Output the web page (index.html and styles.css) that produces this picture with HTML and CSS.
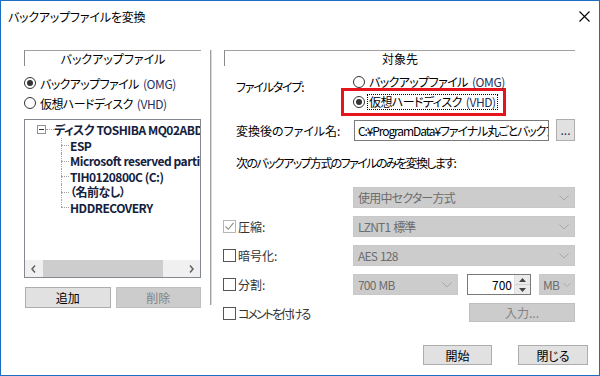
FILE: index.html
```html
<!DOCTYPE html>
<html lang="ja">
<head>
    <meta charset="UTF-8">
    <title>バックアップファイルを変換</title>
    <link rel="stylesheet" href="styles.css">
</head>
<body>
    <div class="window">
        <div class="titlebar">
            <span class="title">バックアップファイルを変換</span>
            <svg class="close" width="11" height="11" viewBox="0 0 11 11">
                <path d="M0.5 0.5 L10.5 10.5 M10.5 0.5 L0.5 10.5" stroke="#000" stroke-width="1.1" fill="none"/>
            </svg>
        </div>

        <div class="main">
            <div class="source">
                <div class="group-head">バックアップファイル</div>
                <div class="radios">
                    <div class="radio"><span class="dot on"></span><span>バックアップファイル <span class="lat">(OMG)</span></span></div>
                    <div class="radio"><span class="dot"></span><span>仮想ハードディスク <span class="lat">(VHD)</span></span></div>
                </div>
                <div class="tree">
                    <div class="tree-body">
                        <div class="root"><span class="toggle"></span><span class="dash"></span><span>ディスク TOSHIBA MQ02ABD: 931.5 GB</span></div>
                        <ul class="children">
                            <li>ESP</li>
                            <li>Microsoft reserved partition</li>
                            <li>TIH0120800C (C:)</li>
                            <li>（名前なし）</li>
                            <li>HDDRECOVERY</li>
                        </ul>
                    </div>
                    <div class="hscroll">
                        <span class="arrow">
                            <svg width="5" height="8" viewBox="0 0 5 8"><path d="M4 0.5 L1 4 L4 7.5" stroke="#606060" stroke-width="1.5" fill="none"/></svg>
                        </span>
                        <span class="thumb"></span>
                        <span class="track"></span>
                        <span class="arrow">
                            <svg width="5" height="8" viewBox="0 0 5 8"><path d="M1 0.5 L4 4 L1 7.5" stroke="#606060" stroke-width="1.5" fill="none"/></svg>
                        </span>
                    </div>
                </div>
                <div class="btn-row">
                    <button class="btn">追加</button>
                    <button class="btn disabled">削除</button>
                </div>
            </div>

            <div class="separator"></div>

            <div class="target">
                <div class="group-head">対象先</div>

                <div class="type-row">
                    <span class="label tight">ファイルタイプ:</span>
                    <div class="type-options">
                        <div class="radio"><span class="dot"></span><span>バックアップファイル <span class="lat">(OMG)</span></span></div>
                        <div class="marked">
                            <div class="radio"><span class="dot on"></span><span class="focus">仮想ハードディスク <span class="lat">(VHD)</span></span></div>
                        </div>
                    </div>
                </div>

                <div class="name-row">
                    <span class="label">変換後のファイル名:</span>
                    <div class="path">C:¥ProgramData¥ファイナル丸ごとバックアップ¥Backup.vhd</div>
                    <button class="btn browse">...</button>
                </div>

                <p class="note">次のバックアップ方式のファイルのみを変換します:</p>

                <div class="options">
                    <span></span>
                    <div class="combo"><span>使用中セクター方式</span><svg width="10" height="6" viewBox="0 0 10 6"><path d="M0.5 0.5 L5 5 L9.5 0.5" stroke="#a8a8a8" fill="none"/></svg></div>

                    <div class="check"><span class="box on"><svg width="11" height="11" viewBox="0 0 11 11"><path d="M1.5 5.5 L4.3 8.3 L9.5 1.8" stroke="#8c8c8c" stroke-width="1.1" fill="none"/></svg></span><span>圧縮:</span></div>
                    <div class="combo"><span>LZNT1 標準</span><svg width="10" height="6" viewBox="0 0 10 6"><path d="M0.5 0.5 L5 5 L9.5 0.5" stroke="#a8a8a8" fill="none"/></svg></div>

                    <div class="check"><span class="box"></span><span>暗号化:</span></div>
                    <div class="combo"><span>AES 128</span><svg width="10" height="6" viewBox="0 0 10 6"><path d="M0.5 0.5 L5 5 L9.5 0.5" stroke="#a8a8a8" fill="none"/></svg></div>

                    <div class="check"><span class="box"></span><span>分割:</span></div>
                    <div class="split">
                        <div class="combo size"><span>700 MB</span><svg width="10" height="6" viewBox="0 0 10 6"><path d="M0.5 0.5 L5 5 L9.5 0.5" stroke="#a8a8a8" fill="none"/></svg></div>
                        <div class="spin">
                            <span class="spin-value">700</span>
                            <span class="spin-buttons">
                                <span class="spin-btn"><svg width="7" height="4" viewBox="0 0 7 4"><path d="M0 4 L3.5 0 L7 4 Z" fill="#444"/></svg></span>
                                <span class="spin-btn"><svg width="7" height="4" viewBox="0 0 7 4"><path d="M0 0 L3.5 4 L7 0 Z" fill="#444"/></svg></span>
                            </span>
                        </div>
                        <div class="combo unit"><span>MB</span><svg width="8" height="6" viewBox="0 0 10 6"><path d="M0.5 0.5 L5 5 L9.5 0.5" stroke="#a8a8a8" fill="none"/></svg></div>
                    </div>

                    <div class="check"><span class="box"></span><span class="tighter">コメントを付ける</span></div>
                    <button class="btn disabled enter">入力...</button>
                </div>
            </div>
        </div>

        <div class="footer">
            <button class="btn start">開始</button>
            <button class="btn close-btn">閉じる</button>
        </div>
    </div>
</body>
</html>
```

FILE: styles.css
```css
* {
    box-sizing: border-box;
}
body {
    margin: 0;
    background: #fff;
    color: #000;
    font-family: "Noto Sans CJK JP", "Noto Sans", sans-serif;
    font-size: 12px;
    font-feature-settings: "palt";
}
.window {
    width: 600px;
    height: 376px;
    border: 1px solid #1c6fc0;
    background: #fff;
    display: flex;
    flex-direction: column;
}
.titlebar {
    height: 30px;
    display: flex;
    align-items: center;
    justify-content: space-between;
    padding: 0 9px 0 7px;
}
.title {
    letter-spacing: -0.2px;
}
.main {
    display: flex;
    align-items: flex-start;
    padding: 19px 0 0 23px;
}
.lat {
    color: #1d3163;
    letter-spacing: -0.4px;
}
.tight {
    letter-spacing: -1.2px;
}
.tighter {
    letter-spacing: -2px;
}

/* group box heading */
.group-head {
    height: 16px;
    line-height: 15px;
    text-align: center;
    border-top: 1px solid #a0a0a0;
    border-left: 1px solid #8a8a8a;
}

/* radio buttons */
.radio {
    display: flex;
    align-items: center;
    white-space: nowrap;
    letter-spacing: -0.6px;
    word-spacing: 2px;
}
.dot {
    width: 12px;
    height: 12px;
    border: 1px solid #333;
    border-radius: 50%;
    margin-right: 4px;
    display: flex;
    align-items: center;
    justify-content: center;
    flex: none;
}
.dot.on::after {
    content: "";
    width: 6px;
    height: 6px;
    border-radius: 50%;
    background: #333;
}

/* left side */
.source {
    width: 177px;
}
.radios {
    margin-top: 7px;
}
.radios .radio {
    height: 20px;
}
.tree {
    margin-top: 6px;
    height: 159px;
    border: 1px solid #828790;
    display: flex;
    flex-direction: column;
}
.tree-body {
    flex: 1;
    padding: 2px 0 0 12px;
    overflow: hidden;
    white-space: nowrap;
    font-weight: bold;
    color: #14213d;
    line-height: 15.5px;
    letter-spacing: -0.5px;
}
.root {
    display: flex;
    align-items: center;
    height: 15.5px;
}
.toggle {
    width: 9px;
    height: 9px;
    border: 1px solid #919191;
    position: relative;
    flex: none;
}
.toggle::after {
    content: "";
    position: absolute;
    left: 1px;
    top: 3px;
    width: 5px;
    border-top: 1px solid #333;
}
.dash {
    width: 8px;
    border-top: 1px dotted #a0a0a0;
    flex: none;
}
.children {
    list-style: none;
    margin: 0 0 0 24px;
    padding: 0;
}
.children li {
    position: relative;
    padding-left: 9px;
    height: 15.5px;
}
.children li::before {
    content: "";
    position: absolute;
    left: 0;
    top: 0;
    height: 100%;
    border-left: 1px dotted #a0a0a0;
}
.children li:last-child::before {
    height: 50%;
}
.children li::after {
    content: "";
    position: absolute;
    left: 0;
    top: 50%;
    width: 8px;
    border-top: 1px dotted #a0a0a0;
}
.hscroll {
    height: 17px;
    background: #f0f0f0;
    display: flex;
    align-items: center;
}
.arrow {
    width: 17px;
    height: 17px;
    display: flex;
    align-items: center;
    justify-content: center;
    flex: none;
}
.thumb {
    width: 120px;
    height: 17px;
    margin-left: 1px;
    background: #cdcdcd;
}
.track {
    flex: 1;
}
.btn-row {
    display: flex;
    gap: 5px;
    margin-top: 9px;
    padding-left: 1px;
}

/* buttons */
.btn {
    font: inherit;
    color: #000;
    height: 21px;
    padding: 0;
    background: #e1e1e1;
    border: 1px solid #adadad;
}
.btn-row .btn {
    width: 86px;
}
.btn.disabled {
    background: #cccccc;
    border-color: #bfbfbf;
    color: #838383;
}

.separator {
    width: 2px;
    height: 255px;
    margin: 0 12px 0 9px;
    border-left: 1px solid #a0a0a0;
    border-right: 1px solid #dadada;
}

/* right side */
.target {
    width: 352px;
}
.target .group-head {
    width: 351px;
}
.label {
    width: 129px;
    padding-left: 12px;
    flex: none;
    white-space: nowrap;
}
.type-row {
    display: flex;
    margin-top: 9px;
}
.type-row .label {
    margin-top: 5px;
    line-height: 14px;
}
.type-options > .radio {
    height: 13px;
}
.marked {
    margin-left: -12px;
    width: 165px;
    height: 28px;
    border: 3px solid #e5141d;
    padding-left: 9px;
    display: flex;
    align-items: center;
}
.marked .dot {
    margin-right: 2px;
}
.focus {
    border: 1px dotted #000;
    padding: 0 1px;
    line-height: 14px;
}
.name-row {
    display: flex;
    align-items: center;
    height: 22px;
    margin-top: 3px;
}
.path {
    width: 195px;
    height: 21px;
    margin-left: 1px;
    border: 1px solid #7a7a7a;
    padding: 0 3px;
    line-height: 19px;
    overflow: hidden;
    white-space: nowrap;
    letter-spacing: -1.1px;
}
.btn.browse {
    width: 19px;
    height: 22px;
    margin-left: 7px;
    color: #1d3163;
    line-height: 12px;
}
.note {
    margin: 15px 0 0 12px;
    line-height: 14px;
    letter-spacing: -1.6px;
}
.options {
    display: grid;
    grid-template-columns: 129px 222px;
    grid-auto-rows: 21px;
    row-gap: 8px;
    align-items: center;
    margin-top: 17px;
}
.combo {
    height: 21px;
    background: #cccccc;
    border: 1px solid #c8c8c8;
    color: #6d6d6d;
    padding: 0 5px 0 4px;
    display: flex;
    align-items: center;
    justify-content: space-between;
    white-space: nowrap;
    letter-spacing: -0.8px;
    word-spacing: 1px;
}
.check {
    display: flex;
    align-items: center;
    margin-left: -1px;
    color: #333;
    white-space: nowrap;
}
.box {
    width: 13px;
    height: 13px;
    border: 1px solid #555;
    margin-right: 2px;
    display: flex;
    align-items: center;
    justify-content: center;
    flex: none;
}
.box.on {
    border-color: #b5b5b5;
}
.split {
    display: flex;
    align-items: center;
}
.combo.size {
    width: 105px;
}
.spin {
    width: 64px;
    height: 21px;
    margin-left: 9px;
    border: 1px solid #7a7a7a;
    background: #fff;
    display: flex;
}
.spin-value {
    flex: 1;
    text-align: right;
    padding-right: 2px;
    line-height: 19px;
}
.spin-buttons {
    width: 16px;
    display: flex;
    flex-direction: column;
    border-left: 1px solid #e0e0e0;
}
.spin-btn {
    flex: 1;
    background: #eaeaea;
    display: flex;
    align-items: center;
    justify-content: center;
}
.spin-btn + .spin-btn {
    border-top: 1px solid #d0d0d0;
}
.combo.unit {
    width: 36px;
    margin-left: 8px;
    padding-left: 3px;
    padding-right: 3px;
}
.btn.enter {
    width: 106px;
    height: 19px;
    justify-self: end;
    align-self: start;
}

/* bottom buttons */
.footer {
    margin-top: auto;
    display: flex;
    justify-content: flex-end;
    gap: 26px;
    padding: 0 11px 10px 0;
}
.footer .btn {
    height: 20px;
}
.btn.start {
    width: 69px;
}
.btn.close-btn {
    width: 70px;
}
```
